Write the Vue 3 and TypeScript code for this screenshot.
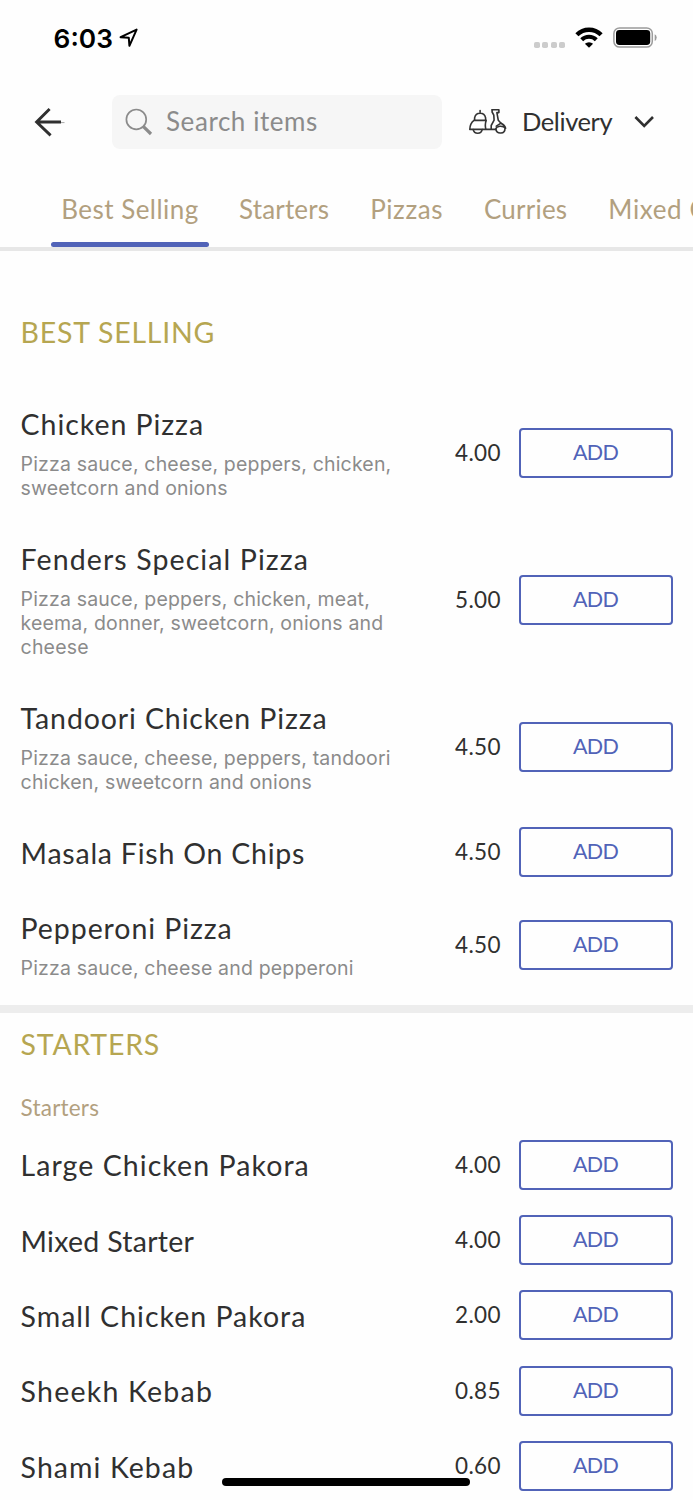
<script setup lang="ts">
interface MenuItem {
  name: string
  tracking: number
  lines: string[]
  price: string
}

interface Tab {
  label: string
  tracking: number
}

const tabs: Tab[] = [
  { label: 'Best Selling', tracking: 0.48 },
  { label: 'Starters', tracking: 0.17 },
  { label: 'Pizzas', tracking: 0.55 },
  { label: 'Curries', tracking: 0.22 },
  { label: 'Mixed C', tracking: 0.6 },
]

const bestSelling: MenuItem[] = [
  { name: 'Chicken Pizza', tracking: 0.95, lines: ['Pizza sauce, cheese, peppers, chicken,', 'sweetcorn and onions'], price: '4.00' },
  { name: 'Fenders Special Pizza', tracking: 1.1, lines: ['Pizza sauce, peppers, chicken, meat,', 'keema, donner, sweetcorn, onions and', 'cheese'], price: '5.00' },
  { name: 'Tandoori Chicken Pizza', tracking: 0.88, lines: ['Pizza sauce, cheese, peppers, tandoori', 'chicken, sweetcorn and onions'], price: '4.50' },
  { name: 'Masala Fish On Chips', tracking: 0.77, lines: [], price: '4.50' },
  { name: 'Pepperoni Pizza', tracking: 0.92, lines: ['Pizza sauce, cheese and pepperoni'], price: '4.50' },
]

const starters: MenuItem[] = [
  { name: 'Large Chicken Pakora', tracking: 1.06, lines: [], price: '4.00' },
  { name: 'Mixed Starter', tracking: 0.27, lines: [], price: '4.00' },
  { name: 'Small Chicken Pakora', tracking: 1, lines: [], price: '2.00' },
  { name: 'Sheekh Kebab', tracking: 1.22, lines: [], price: '0.85' },
  { name: 'Shami Kebab', tracking: 1.07, lines: [], price: '0.60' },
]

const sections = [
  { id: 'best', title: 'BEST SELLING', subtitle: '', items: bestSelling },
  { id: 'starters', title: 'STARTERS', subtitle: 'Starters', items: starters },
]
</script>

<template>
  <div class="screen">
    <header class="status">
      <span class="time">6:03</span>
      <svg class="location" width="20" height="20" viewBox="0 0 20 20">
        <path d="M1.6 9.2 17.6 1.6 10.4 17.8 9.8 9.8Z" fill="none" stroke="#000" stroke-width="2" stroke-linejoin="round" />
      </svg>
      <div class="signal"><i v-for="n in 4" :key="n"></i></div>
      <svg class="wifi" width="28" height="22" viewBox="0 0 28 22">
        <g fill="none" stroke="#000" stroke-width="4.4">
          <path d="M1.9 7.7A17.2 17.2 0 0 1 26.1 7.7" />
          <path d="M6.7 12.7A10.4 10.4 0 0 1 21.3 12.7" stroke-width="4.1" />
        </g>
        <path d="M14 20.8 9.9 16.7A6.2 6.2 0 0 1 18.1 16.7Z" />
      </svg>
      <svg class="battery" width="45" height="22" viewBox="0 0 45 22">
        <rect x="0.9" y="0.9" width="38.4" height="19.2" rx="5.6" fill="none" stroke="#9b9b9b" stroke-width="1.5" />
        <rect x="3" y="3" width="34.2" height="15" rx="3.4" />
        <path d="M41.7 7.2Q43.7 8.2 43.7 10.6T41.7 14Z" fill="#9b9b9b" />
      </svg>
    </header>

    <nav class="toolbar">
      <svg class="back" width="32" height="30" viewBox="0 0 32 30">
        <path d="M15.6 2 2.6 15 16.6 28.4M3 15H27" fill="none" stroke="#303030" stroke-width="2.9" />
        <path d="M27 15.6H30.5" stroke="#a8a8a8" stroke-width="1" />
      </svg>
      <div class="search">
        <svg width="28" height="28" viewBox="0 0 28 28">
          <circle cx="11.3" cy="11.4" r="9.9" fill="none" stroke="#8b8b8b" stroke-width="1.7" />
          <path d="M18.2 18.3 26 26" stroke="#8b8b8b" stroke-width="3.2" />
        </svg>
        <span>Search items</span>
      </div>
      <svg class="scooter" width="38" height="28" viewBox="0 0 38 28">
        <g fill="none" stroke="#333" stroke-width="1.6" stroke-linejoin="round" stroke-linecap="round">
          <path d="M5.6 12V9.8A5.6 5.6 0 0 1 16.6 9.8V12M11.1 4.2V2.6" />
          <path d="M5 12.4H17.2Q15.6 16.5 16.9 21.4M5 12.4C2.6 14.2.9 17.7.8 21.4H26.6" />
          <path d="M4.2 21.6A4.6 4.6 0 0 0 13.2 21.6" />
          <path d="M23.1 1.8H29.9V4.6H27.9L29.3 12.3 32 15.2C34.3 16.3 36 18 36.6 20.2C33.5 17.2 27.5 17.6 26.6 21.4" />
          <path d="M23.1 1.8V4L24.8 7.2 25.1 12.2 22.2 17.5V21.2" />
          <path d="M27.3 18.2 32 15.2M26.9 21.4A4.6 4.6 0 0 0 36 20.4" />
        </g>
      </svg>
      <span class="mode">Delivery</span>
      <svg class="chevron" width="20" height="14" viewBox="0 0 20 14">
        <path d="M1.4 2 10.2 11 19 2" fill="none" stroke="#303030" stroke-width="2.6" />
      </svg>
    </nav>

    <div class="tabs">
      <div v-for="(tab, i) in tabs" :key="tab.label" class="tab" :class="{ active: i === 0 }" :style="{ letterSpacing: `${tab.tracking}px` }">{{ tab.label }}</div>
    </div>

    <section v-for="section in sections" :key="section.id" :class="section.id">
      <h2>{{ section.title }}</h2>
      <h3 v-if="section.subtitle">{{ section.subtitle }}</h3>
      <article v-for="item in section.items" :key="item.name">
        <div class="info">
          <h4 :style="{ letterSpacing: `${item.tracking}px` }">{{ item.name }}</h4>
          <p v-if="item.lines.length"><span v-for="line in item.lines" :key="line">{{ line }}</span></p>
        </div>
        <span class="price">{{ item.price }}</span>
        <button type="button">ADD</button>
      </article>
    </section>
    <div class="home"></div>
  </div>
</template>

<style>
body { background: #fefefe; overflow: hidden; }
</style>

<style scoped>
* { box-sizing: border-box; }
.screen { position: relative; width: 693px; height: 1500px; overflow: hidden; background: #fefefe; color: #303030; font-family: Lato, "Open Sans", sans-serif; }
.status { display: flex; height: 76px; padding-left: 53px; align-items: center; }
.time { width: 66px; padding: 1px 0 0 0.6px; font: 600 26.3px/32px Inter, sans-serif; color: #000; white-space: nowrap; }
.signal { display: flex; gap: 2.4px; margin: 13px 0 0 395px; }
.signal i { width: 6px; height: 6px; border-radius: 1.8px; background: #ccc; }
.wifi { margin-left: 10px; }
.battery { margin-left: 10px; }
.toolbar { display: flex; height: 92px; align-items: center; padding-left: 34px; }
.search { display: flex; align-items: center; width: 330px; height: 54px; margin-left: 46px; padding-left: 13px; border-radius: 8px; background: #f6f6f6; font-size: 26px; line-height: 32px; color: #8b8b8b; letter-spacing: 0.57px; }
.search span { margin-left: 13px; padding-bottom: 2px; }
.scooter { margin-left: 27px; }
.mode { width: 91px; margin-left: 15px; padding-bottom: 2px; font-size: 25.5px; line-height: 32px; letter-spacing: -0.42px; white-space: nowrap; }
.chevron { margin-left: 21px; }
.tabs { display: flex; height: 83px; padding-left: 51px; border-bottom: 4px solid #e7e7e7; font-size: 26px; line-height: 82px; color: #b2a07f; white-space: nowrap; }
.tab { position: relative; flex: none; margin-right: 41px; }
.tab.active { width: 158px; margin-right: 30px; text-align: center; }
.tab.active::after { content: ""; position: absolute; left: 0; bottom: 0; width: 158px; height: 5px; border-radius: 3px; background: #5163b8; }
h2, h3, h4, p { margin: 0; font-weight: 400; }
h2 { padding-left: 20.6px; font-size: 28.5px; line-height: 36px; letter-spacing: 0.75px; color: #b6a651; }
.best { height: 754px; padding-top: 63px; }
.best h2 { margin-bottom: 35.9px; }
.starters { border-top: 8px solid #ededed; padding-top: 13px; }
h3 { margin: 31px 0 4px 20.6px; font-size: 22.5px; line-height: 30px; height: 30px; letter-spacing: 0.2px; color: #b2a07f; }
article { display: flex; align-items: center; padding-right: 20px; }
.info { flex: 1; padding: 21.4px 0 18.8px 20.6px; }
.starters .info { padding-bottom: 18.95px; }
h4 { font-size: 28.5px; line-height: 35px; white-space: nowrap; }
p { padding: 10px 0 1.6px; font: 400 19.5px/24px Inter, sans-serif; color: #8b8b8b; letter-spacing: 0.17px; }
p span { display: block; white-space: nowrap; }
.price { font-size: 22.5px; line-height: 30px; letter-spacing: 0.4px; margin-right: 18px; }
button { width: 154px; height: 50px; padding: 0 1px 2px 0; border: 2px solid #5163b8; border-radius: 4px; background: transparent; font: 400 21.5px/30px Lato, sans-serif; letter-spacing: -0.7px; color: #5163b8; }
.home { position: absolute; left: 222px; top: 1478px; width: 248px; height: 8px; border-radius: 4px; background: #000; }
</style>
